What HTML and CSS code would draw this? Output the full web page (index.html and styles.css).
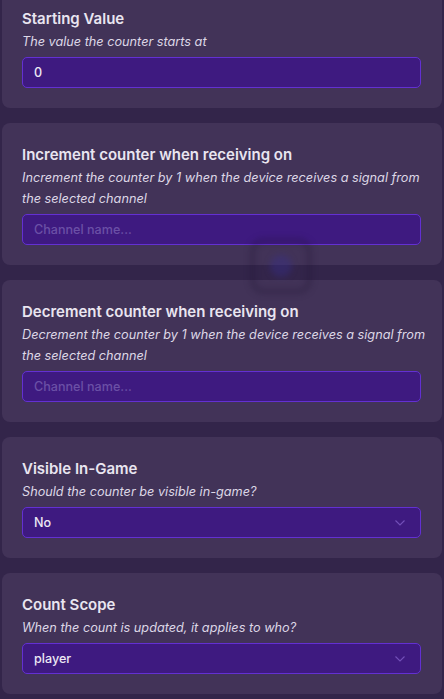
FILE: index.html
```html
<!DOCTYPE html>
<html>
<head>
<meta charset="utf-8">
<link rel="stylesheet" href="styles.css">
</head>
<body>
<div class="page">
  <div class="card card-first">
    <div class="title">Starting Value</div>
    <div class="desc">The value the counter starts at</div>
    <div class="field"><span class="value">0</span></div>
  </div>
  <div class="card">
    <div class="title">Increment counter when receiving on</div>
    <div class="desc">Increment the counter by 1 when the device receives a signal from the selected channel</div>
    <div class="field"><span class="placeholder">Channel name...</span></div>
  </div>
  <div class="card">
    <div class="title">Decrement counter when receiving on</div>
    <div class="desc">Decrement the counter by 1 when the device receives a signal from the selected channel</div>
    <div class="field"><span class="placeholder">Channel name...</span></div>
  </div>
  <div class="card">
    <div class="title">Visible In-Game</div>
    <div class="desc">Should the counter be visible in-game?</div>
    <div class="field select"><span class="value">No</span>
      <svg class="chev" width="10" height="6" viewBox="0 0 10 6"><path d="M0.5 0.5 L5 5 L9.5 0.5" fill="none" stroke="#7350b8" stroke-width="1.1"/></svg>
    </div>
  </div>
  <div class="card">
    <div class="title">Count Scope</div>
    <div class="desc">When the count is updated, it applies to who?</div>
    <div class="field select"><span class="value">player</span>
      <svg class="chev" width="10" height="6" viewBox="0 0 10 6"><path d="M0.5 0.5 L5 5 L9.5 0.5" fill="none" stroke="#7350b8" stroke-width="1.1"/></svg>
    </div>
  </div>
  <div class="ghost"><div class="ghost-dot"></div></div>
</div>
</body>
</html>
```
FILE: styles.css
```css
html, body {
  margin: 0;
  padding: 0;
  background: #33254a;
  overflow: hidden;
}
body {
  font-family: Inter, "Noto Sans", sans-serif;
  color: #e8e4ef;
}
.page {
  position: relative;
  display: flex;
  flex-direction: column;
  gap: 15px;
  padding: 0 2px;
  margin-top: -13px;
}
.card {
  background: #423358;
  border-radius: 8px;
  padding: 20px 21px 20px 20px;
  display: flex;
  flex-direction: column;
}
.title {
  font-size: 15px;
  font-weight: 600;
  line-height: 24px;
  color: #e9e5f0;
}
.desc {
  font-size: 12.7px;
  font-style: italic;
  line-height: 21px;
  color: #ddd7e6;
  margin: 0 -12px 5px 0;
}
.field {
  height: 31px;
  box-sizing: border-box;
  background: #3e1a80;
  border: 1px solid #6330d2;
  border-radius: 5px;
  display: flex;
  align-items: center;
  justify-content: space-between;
  padding: 0 15px 0 11px;
  font-size: 12.6px;
}
.value {
  color: #ece8f4;
  font-weight: 500;
}
.placeholder {
  color: #6b50a6;
  font-weight: 500;
}
.chev {
  display: block;
}
.ghost {
  position: absolute;
  left: 250px;
  top: 251px;
  width: 62px;
  height: 56px;
  box-sizing: border-box;
  border: 5px solid rgba(30, 18, 50, 0.3);
  border-radius: 14px;
  filter: blur(3px);
  display: flex;
  align-items: center;
  justify-content: center;
  pointer-events: none;
}
.ghost-dot {
  width: 22px;
  height: 22px;
  border-radius: 50%;
  background: rgba(55, 45, 150, 0.35);
}
```
